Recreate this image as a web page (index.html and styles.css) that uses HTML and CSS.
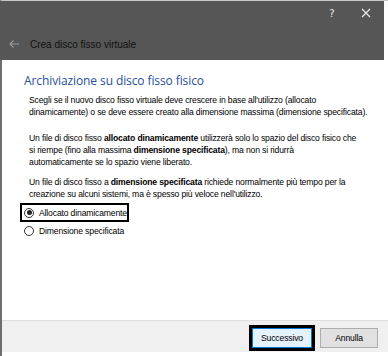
FILE: index.html
```html
<!DOCTYPE html>
<html lang="it">
<head>
<meta charset="utf-8">
<link rel="stylesheet" href="styles.css">
</head>
<body>
<div class="window">
  <header class="titlebar">
    <div class="caption">
      <span class="cap-btn help">?</span>
      <span class="cap-btn close">
        <svg width="10" height="10" viewBox="0 0 10 10"><path d="M1 1L9 9M9 1L1 9" stroke="#e8e8e8" stroke-width="1.2"/></svg>
      </span>
    </div>
    <div class="nav">
      <svg class="back" width="10" height="8" viewBox="0 0 10 8"><path d="M1 4H10M4.5 0.5L1 4L4.5 7.5" stroke="#9a9a9a" stroke-width="1.1" fill="none"/></svg>
      <span class="nav-title">Crea disco fisso virtuale</span>
    </div>
  </header>
  <main class="content">
    <h1 class="heading">Archiviazione su disco fisso fisico</h1>
    <p class="para p1">Scegli se il nuovo disco fisso virtuale deve crescere in base all'utilizzo (allocato<br>dinamicamente) o se deve essere creato alla dimensione massima (dimensione specificata).</p>
    <p class="para p2">Un file di disco fisso <b>allocato dinamicamente</b> utilizzerà solo lo spazio del disco fisico che<br>si riempe (fino alla massima <b>dimensione specificata</b>), ma non si ridurrà<br>automaticamente se lo spazio viene liberato.</p>
    <p class="para p3">Un file di disco fisso a <b>dimensione specificata</b> richiede normalmente più tempo per la<br>creazione su alcuni sistemi, ma è spesso più veloce nell'utilizzo.</p>
    <div class="options">
      <label class="option focused"><span class="radio checked"></span>Allocato dinamicamente</label>
      <label class="option"><span class="radio"></span>Dimensione specificata</label>
    </div>
  </main>
  <footer class="footer">
    <span class="focus-ring"><button class="btn primary">Successivo</button></span>
    <button class="btn">Annulla</button>
  </footer>
</div>
</body>
</html>
```
FILE: styles.css
```css
* { box-sizing: border-box; }
html, body { margin: 0; padding: 0; background: #fff; }
body { width: 388px; height: 356px; overflow: hidden; font-family: "Liberation Sans", Arial, sans-serif; color: #000; }
.window { height: 356px; display: flex; flex-direction: column; border-left: 2px solid #6e6e6e; border-top: 1px solid #c8c8c8; }
.titlebar { background: #565656; height: 59px; flex: none; margin-left: -2px; margin-right: 4px; display: flex; flex-direction: column; }
.caption { height: 24px; display: flex; justify-content: flex-end; align-items: center; padding-right: 12px; gap: 22px; }
.cap-btn { color: #e8e8e8; font-size: 11px; display: flex; align-items: center; justify-content: center; width: 12px; }
.help { font-family: "DejaVu Sans", sans-serif; font-size: 10px; }
.nav { display: flex; align-items: center; height: 35px; padding-left: 9px; padding-top: 3px; gap: 11px; }
.nav-title { color: #111; font-size: 10px; }
.content { flex: 1; padding: 13px 0 0 20px; }
.heading { margin: 0 0 5px 2px; font-family: "Open Sans", sans-serif; font-weight: 400; font-size: 12px; line-height: 16px; color: #1f4f9b; letter-spacing: -0.1px; }
.para { margin: 0 0 0 7px; font-size: 8.6px; line-height: 12px; white-space: nowrap; letter-spacing: -0.15px; }
.p1 { margin-bottom: 14px; }
.p2 { margin-bottom: 8px; }
.para b { font-weight: 700; }
.options { display: flex; flex-direction: column; gap: 3px; margin-top: 5px; }
.option { display: inline-flex; align-items: center; gap: 5px; font-size: 8.6px; height: 15px; padding-left: 2px; width: max-content; letter-spacing: -0.15px; }
.option.focused { outline: 2px solid #000; outline-offset: 0; }
.radio { width: 10px; height: 10px; border: 1px solid #333; border-radius: 50%; display: inline-flex; align-items: center; justify-content: center; background: #fff; }
.radio.checked::after { content: ""; width: 5px; height: 5px; border-radius: 50%; background: #222; }
.footer { height: 32px; flex: none; background: #f0f0f0; border-top: 1px solid #dfdfdf; display: flex; justify-content: flex-end; align-items: center; gap: 5px; padding-right: 10px; padding-top: 2px; margin-bottom: 4px; }
.focus-ring { border: 3px solid #000; display: inline-flex; }
.btn { font-family: "Liberation Sans", Arial, sans-serif; font-size: 8.6px; height: 20px; background: #e1e1e1; border: 1px solid #adadad; padding: 0; width: 58px; color: #000; letter-spacing: -0.15px; }
.btn.primary { background: #e5f1fb; border: 1px solid #0078d7; width: 60px; }
```
